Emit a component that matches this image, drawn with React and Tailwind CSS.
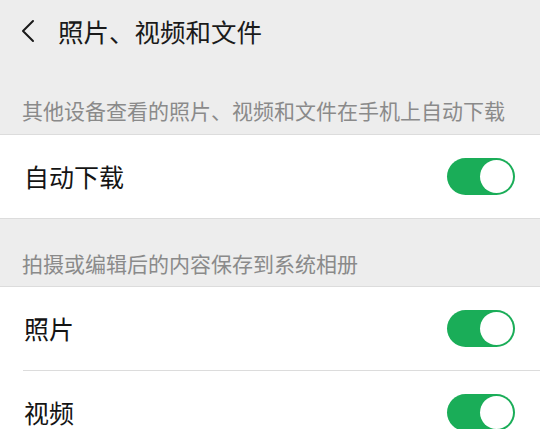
import React, { useState } from "react";

function Toggle({ on, onClick }) {
  return (
    <button
      onClick={onClick}
      className={`relative w-[68px] h-[37px] rounded-full shrink-0 ${on ? "bg-[#1aad58]" : "bg-[#e5e5e5]"}`}
    >
      <span
        className={`absolute top-[2px] w-[33px] h-[33px] rounded-full bg-white ${on ? "right-[2px]" : "left-[2px]"}`}
      />
    </button>
  );
}

function Row({ label, on, onClick, divider }) {
  return (
    <div className="bg-white">
      <div className="h-[83px] flex items-center justify-between pl-[24px] pr-[25px]">
        <span className="text-[25px] leading-[25px] text-[#141414]">{label}</span>
        <Toggle on={on} onClick={onClick} />
      </div>
      {divider && <div className="ml-[23px] h-px bg-[#dcdcdc]" />}
    </div>
  );
}

export default function App() {
  const [auto, setAuto] = useState(true);
  const [photo, setPhoto] = useState(true);
  const [video, setVideo] = useState(true);

  return (
    <div
      className="w-[540px] h-[429px] overflow-hidden bg-[#ededed]"
      style={{ fontFamily: '"Noto Sans CJK SC", "Noto Sans", sans-serif' }}
    >
      {/* Header */}
      <div className="h-[62px] flex items-center">
        <svg className="ml-[18px] w-[20px] h-[24px]" viewBox="0 0 20 24" fill="none">
          <path d="M15 2 L5 12 L15 22" stroke="#1a1a1a" strokeWidth="2" strokeLinecap="round" strokeLinejoin="round" />
        </svg>
        <h1 className="ml-[20px] text-[25.5px] leading-[26px] text-[#1a1a1a]">照片、视频和文件</h1>
      </div>

      <div className="h-[72px] flex items-end pl-[22px] pb-[13px]">
        <span className="text-[21px] leading-[21px] text-[#8a8a8a]">其他设备查看的照片、视频和文件在手机上自动下载</span>
      </div>
      <div className="border-t border-b border-[#dcdcdc]">
        <Row label="自动下载" on={auto} onClick={() => setAuto(!auto)} />
      </div>

      <div className="h-[67px] flex items-end pl-[22px] pb-[12px]">
        <span className="text-[21px] leading-[21px] text-[#8a8a8a]">拍摄或编辑后的内容保存到系统相册</span>
      </div>
      <div className="border-t border-[#dcdcdc]">
        <Row label="照片" on={photo} onClick={() => setPhoto(!photo)} divider />
        <Row label="视频" on={video} onClick={() => setVideo(!video)} />
      </div>
    </div>
  );
}
